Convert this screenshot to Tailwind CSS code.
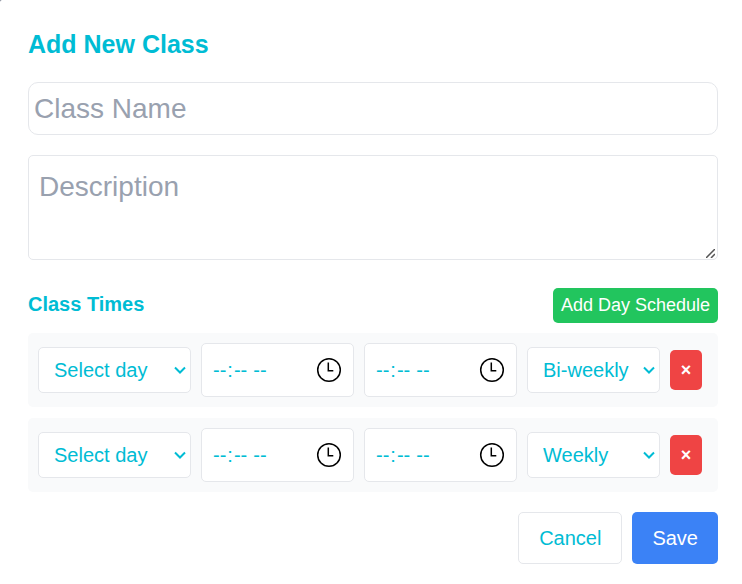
<!DOCTYPE html>
<html lang="en-US">
<head>
<meta charset="utf-8">
<meta name="viewport" content="width=device-width, initial-scale=1">
<title>Add New Class</title>
<script src="https://cdn.jsdelivr.net/npm/@tailwindcss/browser@4"></script>
</head>
<body class="bg-gray-500 font-['Liberation_Sans',Arial,sans-serif] text-[#00bcd4]">
<main class="min-h-screen rounded-tl-[2px] bg-white pt-7 pr-6 pb-5 pl-7">
  <form>
    <h1 class="text-[25px] leading-8 font-bold">Add New Class</h1>
    <input type="text" aria-label="Class name" placeholder="Class Name" class="mt-[22px] block h-[53px] w-full rounded-[10px] border border-gray-200 bg-white px-[5px] text-[28px] placeholder:text-gray-400">
    <div class="mt-5 grid">
      <textarea aria-label="Description" placeholder="Description" class="col-start-1 row-start-1 h-[105px] w-full resize-y rounded-[5px] border border-gray-200 bg-white p-2.5 text-[28px] leading-[42px] placeholder:text-gray-400 [&::-webkit-resizer]:bg-transparent"></textarea>
      <svg class="pointer-events-none col-start-1 row-start-1 mr-[3px] mb-[2px] size-[9px] self-end justify-self-end" viewBox="0 0 9 9" fill="none" stroke="#555" stroke-width="1.5"><path d="M0 9 9 0M5 9l4-4"/></svg>
    </div>

    <div class="mt-7 flex items-start justify-between">
      <h2 class="text-xl leading-8 font-bold">Class Times</h2>
      <button type="button" class="h-[35px] rounded-[5px] bg-[#22c55e] px-2 text-[18px] text-white">Add Day Schedule</button>
    </div>

    <div class="mt-2.5 flex flex-col gap-[11px]">
      <div class="grid grid-cols-[1fr_1fr_1fr_133px_32px] items-center gap-2.5 rounded-[5px] bg-gray-50 py-2.5 pr-4 pl-2.5">
        <div class="grid items-center">
          <select aria-label="Day" class="col-start-1 row-start-1 h-[46px] w-full appearance-none rounded-[5px] border border-gray-200 bg-white pl-[15px] text-xl"><option>Select day</option><option>Monday</option><option>Tuesday</option><option>Wednesday</option><option>Thursday</option><option>Friday</option></select>
          <svg class="pointer-events-none col-start-1 row-start-1 mr-[5px] h-2 w-3 justify-self-end" viewBox="0 0 12 8" fill="none" stroke="currentColor" stroke-width="2"><path d="M1 1.5 6 6.5l5-5"/></svg>
        </div>
        <div class="grid items-center">
          <input type="time" aria-label="Start time" class="col-start-1 row-start-1 h-[54px] w-full rounded-[5px] border border-gray-200 bg-white px-2.5 text-xl [&::-webkit-calendar-picker-indicator]:opacity-0">
          <svg class="pointer-events-none col-start-1 row-start-1 mr-3 size-[26px] justify-self-end" viewBox="0 0 26 26" fill="none" stroke="#000" stroke-width="1.5"><circle cx="13" cy="13" r="11.3"/><path d="M12.3 5.5v8.2h5"/></svg>
        </div>
        <div class="grid items-center">
          <input type="time" aria-label="End time" class="col-start-1 row-start-1 h-[54px] w-full rounded-[5px] border border-gray-200 bg-white px-2.5 text-xl [&::-webkit-calendar-picker-indicator]:opacity-0">
          <svg class="pointer-events-none col-start-1 row-start-1 mr-3 size-[26px] justify-self-end" viewBox="0 0 26 26" fill="none" stroke="#000" stroke-width="1.5"><circle cx="13" cy="13" r="11.3"/><path d="M12.3 5.5v8.2h5"/></svg>
        </div>
        <div class="grid items-center">
          <select aria-label="Frequency" class="col-start-1 row-start-1 h-[46px] w-full appearance-none rounded-[5px] border border-gray-200 bg-white pl-[15px] text-xl"><option>Weekly</option><option selected>Bi-weekly</option></select>
          <svg class="pointer-events-none col-start-1 row-start-1 mr-[5px] h-2 w-3 justify-self-end" viewBox="0 0 12 8" fill="none" stroke="currentColor" stroke-width="2"><path d="M1 1.5 6 6.5l5-5"/></svg>
        </div>
        <button type="button" aria-label="Remove schedule" class="h-10 rounded-[5px] bg-[#ef4444] text-[18px] font-bold text-white">×</button>
      </div>

      <div class="grid grid-cols-[1fr_1fr_1fr_133px_32px] items-center gap-2.5 rounded-[5px] bg-gray-50 py-2.5 pr-4 pl-2.5">
        <div class="grid items-center">
          <select aria-label="Day" class="col-start-1 row-start-1 h-[46px] w-full appearance-none rounded-[5px] border border-gray-200 bg-white pl-[15px] text-xl"><option>Select day</option><option>Monday</option><option>Tuesday</option><option>Wednesday</option><option>Thursday</option><option>Friday</option></select>
          <svg class="pointer-events-none col-start-1 row-start-1 mr-[5px] h-2 w-3 justify-self-end" viewBox="0 0 12 8" fill="none" stroke="currentColor" stroke-width="2"><path d="M1 1.5 6 6.5l5-5"/></svg>
        </div>
        <div class="grid items-center">
          <input type="time" aria-label="Start time" class="col-start-1 row-start-1 h-[54px] w-full rounded-[5px] border border-gray-200 bg-white px-2.5 text-xl [&::-webkit-calendar-picker-indicator]:opacity-0">
          <svg class="pointer-events-none col-start-1 row-start-1 mr-3 size-[26px] justify-self-end" viewBox="0 0 26 26" fill="none" stroke="#000" stroke-width="1.5"><circle cx="13" cy="13" r="11.3"/><path d="M12.3 5.5v8.2h5"/></svg>
        </div>
        <div class="grid items-center">
          <input type="time" aria-label="End time" class="col-start-1 row-start-1 h-[54px] w-full rounded-[5px] border border-gray-200 bg-white px-2.5 text-xl [&::-webkit-calendar-picker-indicator]:opacity-0">
          <svg class="pointer-events-none col-start-1 row-start-1 mr-3 size-[26px] justify-self-end" viewBox="0 0 26 26" fill="none" stroke="#000" stroke-width="1.5"><circle cx="13" cy="13" r="11.3"/><path d="M12.3 5.5v8.2h5"/></svg>
        </div>
        <div class="grid items-center">
          <select aria-label="Frequency" class="col-start-1 row-start-1 h-[46px] w-full appearance-none rounded-[5px] border border-gray-200 bg-white pl-[15px] text-xl"><option selected>Weekly</option><option>Bi-weekly</option></select>
          <svg class="pointer-events-none col-start-1 row-start-1 mr-[5px] h-2 w-3 justify-self-end" viewBox="0 0 12 8" fill="none" stroke="currentColor" stroke-width="2"><path d="M1 1.5 6 6.5l5-5"/></svg>
        </div>
        <button type="button" aria-label="Remove schedule" class="h-10 rounded-[5px] bg-[#ef4444] text-[18px] font-bold text-white">×</button>
      </div>
    </div>

    <div class="mt-5 flex justify-end gap-2.5">
      <button type="button" class="h-[52px] rounded-[5px] border border-gray-200 bg-white px-5 text-xl">Cancel</button>
      <button type="submit" class="h-[52px] rounded-[5px] bg-[#3b82f6] px-5 text-xl text-white">Save</button>
    </div>
  </form>
</main>
</body>
</html>
